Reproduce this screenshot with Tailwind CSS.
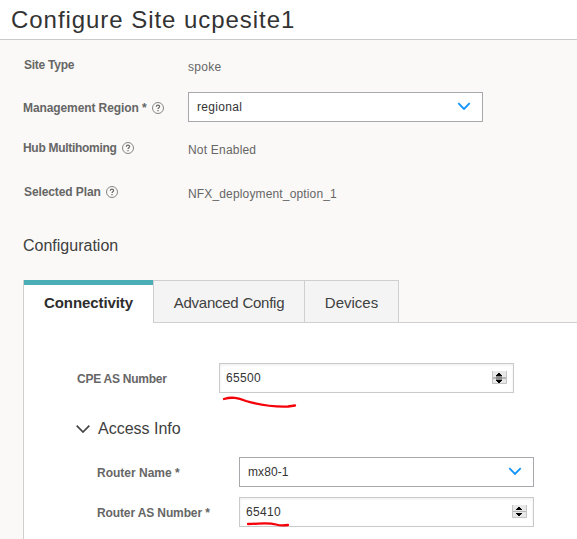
<!DOCTYPE html>
<html lang="en">
<head>
<meta charset="utf-8">
<title>Configure Site</title>
<script src="https://cdn.jsdelivr.net/npm/@tailwindcss/browser@4"></script>
</head>
<body class="h-[539px] w-[577px] overflow-hidden bg-[#faf9f7] font-['Liberation_Sans',Arial,sans-serif] text-[12px] leading-[14px] text-[#666]">
<svg class="hidden">
  <symbol id="help" viewBox="0 0 12 12"><circle cx="6" cy="6" r="5.5" fill="none" stroke="#858585"/><path d="M4.3 4.7C4.4 2.7 7.6 2.8 7.6 4.5C7.6 5.7 6 5.7 6 7.1M6 8.1V9.2" fill="none" stroke="#666" stroke-width="1.2"/></symbol>
  <symbol id="chev" viewBox="0 0 14 9"><path d="M1.3 1.2L7 7L12.7 1.2" fill="none" stroke="#0f93f8" stroke-width="1.8"/></symbol>
  <symbol id="spin" viewBox="0 0 15 14"><path d="M0 0H15V13H0Z" fill="#e8e8e8"/><path d="M.5 0V12.5H14.5V0" fill="none" stroke="#c4c4c4"/><path d="M1 6H14V7H1Z" fill="#b5b5b5"/><path d="M6 2H8V3H9V4H10V5H4V4H5V3H6ZM4 8H10V9H9V10H8V11H6V10H5V9H4Z" fill="#000"/></symbol>
  <symbol id="spin-active" viewBox="0 0 15 14"><path d="M0 0H15V13H0Z" fill="#e8e8e8"/><path d="M.5 0V12.5H14.5V0" fill="none" stroke="#c4c4c4"/><path d="M1 6H14V8H1Z" fill="#b5b5b5"/><path d="M4 4H10V10H4Z" fill="#8a8a8a"/><path d="M6 2H8V3H9V4H10V5H4V4H5V3H6ZM4 9H10V10H9V11H8V12H6V11H5V10H4Z" fill="#000"/></symbol>
</svg>
<header class="h-10 border-b border-[#c9cacc] bg-white pl-[11px] pt-1.5 text-[24px] leading-[28px] tracking-[0.95px] text-[#333]">Configure Site ucpesite1</header>
<main>
  <section class="grid grid-cols-[165px_295px] grid-rows-[50px_34px_50px_36px] items-center pl-[23px]">
    <div class="pl-px font-bold tracking-[-0.25px]">Site Type</div>
    <div class="pt-1 tracking-[0.3px]">spoke</div>
    <div class="flex items-center gap-1.5 pt-0.5 font-bold tracking-[-0.1px]">Management Region * <svg class="size-3"><use href="#help"/></svg></div>
    <div class="flex h-[30px] items-center justify-between border border-[#a6a8ab] bg-white pl-2 pr-[11px] tracking-[0.3px] text-[#333]">regional<svg class="mb-0.5 h-[9px] w-[14px]"><use href="#chev"/></svg></div>
    <div class="flex items-center gap-1.5 pb-0.5 font-bold tracking-[-0.3px]">Hub Multihoming <svg class="size-3"><use href="#help"/></svg></div>
    <div class="pt-0.5 tracking-[0.2px]">Not Enabled</div>
    <div class="flex items-center gap-[5px] pl-px font-bold tracking-[-0.1px]">Selected Plan <svg class="size-3"><use href="#help"/></svg></div>
    <div class="pt-1 tracking-[0.15px]">NFX_deployment_option_1</div>
  </section>
  <h2 class="pl-[23px] pt-[27px] text-[16px] leading-[18px] text-[#404040]">Configuration</h2>
  <div class="ml-[23px] mt-[25px] flex h-[43px] text-[15px] leading-[18px] text-[#404040]">
    <div class="w-[131px] border-x border-[#cfcfcf] bg-white"><div class="h-[43px] border-t-[5px] border-[#4badb5] pt-[9px] text-center font-bold tracking-[-0.1px] text-[#2d2d2d]">Connectivity</div></div>
    <div class="w-[151px] border-y border-r border-[#cfcfcf] bg-[#f4f4f4] pt-[13px] text-center tracking-[-0.25px]">Advanced Config</div>
    <div class="w-[94px] border-y border-r border-[#cfcfcf] bg-[#f4f4f4] pt-[13px] text-center">Devices</div>
    <div class="flex-1 border-b border-[#cfcfcf]"></div>
  </div>
  <section class="ml-[23px] h-[216px] border-l border-[#cfcfcf] bg-white pl-[53px] pt-10">
    <div class="flex items-center">
      <div class="w-[142px] pt-0.5 font-bold tracking-[-0.25px]">CPE AS Number</div>
      <div class="relative flex h-[30px] w-[295px] items-center justify-between border border-[#cacaca] pl-1.5 pr-1.5 tracking-[0.3px] text-[#333] shadow-[inset_0_1px_3px_#00000014]">65500<svg class="h-[14px] w-[15px]"><use href="#spin-active"/></svg>
        <svg class="absolute left-[2px] top-[32px] h-[14px] w-[78px]" viewBox="0 0 78 14"><path d="M2 3C10 .5 16 2 24 5C38 9 51 11 66 10.5L73 9.5" fill="none" stroke="#f50008" stroke-width="2.3" stroke-linecap="round"/></svg>
      </div>
    </div>
    <div class="mt-[27px] flex h-[18px] items-center gap-2 text-[16px] leading-[18px] text-[#404040]"><svg class="-ml-px h-2 w-[14px]" viewBox="0 0 14 8"><path d="M.7.7L7 7L13.3.7" fill="none" stroke="#444" stroke-width="1.7"/></svg>Access Info</div>
    <div class="ml-5 mt-[19px] flex items-center">
      <div class="w-[142px] pt-0.5 font-bold">Router Name *</div>
      <div class="flex h-[30px] w-[295px] items-center justify-between border border-[#a6a8ab] pl-2 pr-[11px] tracking-[0.1px] text-[#333]">mx80-1<svg class="mb-0.5 h-[9px] w-[14px]"><use href="#chev"/></svg></div>
    </div>
    <div class="ml-5 mt-2.5 flex items-center">
      <div class="w-[142px] pt-0.5 font-bold tracking-[-0.12px]">Router AS Number *</div>
      <div class="relative flex h-[30px] w-[295px] items-center justify-between border border-[#cacaca] pl-1.5 pr-1.5 tracking-[0.3px] text-[#333] shadow-[inset_0_1px_3px_#00000014]">65410<svg class="h-[14px] w-[15px]"><use href="#spin"/></svg>
        <svg class="absolute left-[6px] top-[23px] h-[8px] w-[46px]" viewBox="0 0 46 8"><path d="M2 3C13 3 21 1 30 3.5C35 5 39 4.5 42 4" fill="none" stroke="#f50008" stroke-width="2.3" stroke-linecap="round"/></svg>
      </div>
    </div>
  </section>
</main>
</body>
</html>
